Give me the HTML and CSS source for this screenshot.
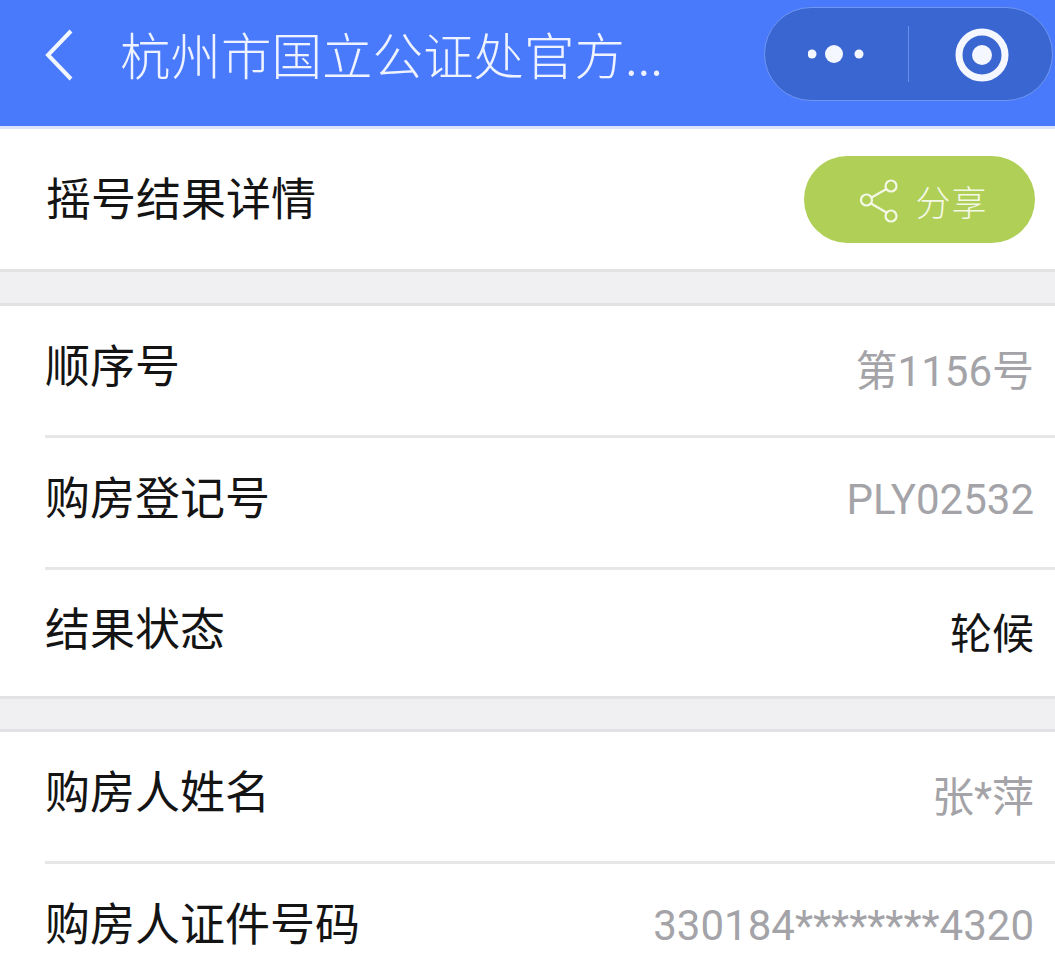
FILE: index.html
```html
<!DOCTYPE html>
<html lang="zh">
<head>
<meta charset="utf-8">
<title>摇号结果详情</title>
<link rel="stylesheet" href="styles.css">
</head>
<body>
<header class="nav">
  <svg class="back" width="30" height="52" viewBox="0 0 30 52"><path d="M27 2 L4 26 L27 50" fill="none" stroke="#f2f6ff" stroke-width="4"/></svg>
  <div class="nav-title">杭州市国立公证处官方...</div>
  <div class="capsule">
    <div class="cap-left">
      <svg width="58" height="20" viewBox="0 0 58 20"><circle cx="4" cy="10" r="4.500" fill="#f4f7ff"/><circle cx="26" cy="10" r="9" fill="#f4f7ff"/><circle cx="51" cy="10" r="4.500" fill="#f4f7ff"/></svg>
    </div>
    <div class="cap-div"></div>
    <div class="cap-right">
      <svg class="ring" width="54" height="54" viewBox="0 0 54 54"><circle cx="27" cy="27" r="23" fill="none" stroke="#f4f7ff" stroke-width="7"/><circle cx="27" cy="27" r="10" fill="#f4f7ff"/></svg>
    </div>
  </div>
</header>

<section class="head-row">
  <div class="label">摇号结果详情</div>
  <div class="share">
    <svg class="share-icon" width="40" height="44" viewBox="0 0 40 44" fill="none" stroke="#f4f8e6" stroke-width="2.2"><circle cx="31" cy="7" r="5.500"/><circle cx="6.500" cy="21" r="5.500"/><circle cx="31" cy="37" r="5.500"/><path d="M26.500 10 L11.500 18.500 M11 24.500 L26.500 33.500"/></svg>
    <span class="share-text">分享</span>
  </div>
</section>

<div class="gap gap-one"></div>

<section class="group">
  <div class="row"><div class="label">顺序号</div><div class="value">第1156号</div></div>
  <div class="row"><div class="label">购房登记号</div><div class="value">PLY02532</div></div>
  <div class="row short"><div class="label">结果状态</div><div class="value strong">轮候</div></div>
</section>

<div class="gap gap-two"></div>

<section class="group">
  <div class="row"><div class="label">购房人姓名</div><div class="value">张*萍</div></div>
  <div class="row"><div class="label">购房人证件号码</div><div class="value">330184********4320</div></div>
</section>
</body>
</html>
```

FILE: styles.css
```css
* { box-sizing: border-box; }
html, body { margin: 0; padding: 0; }
body {
  width: 1055px;
  height: 978px;
  overflow: hidden;
  background: #fff;
  font-family: "Liberation Sans", Roboto, "Noto Sans CJK SC", sans-serif;
}
.nav {
  height: 129px;
  background: #4a7afc;
  border-bottom: 3px solid #dbe4f8;
  display: flex;
  align-items: flex-start;
  position: relative;
}
.back { margin: 29px 0 0 44px; flex: none; }
.nav-title {
  margin: 26px 0 0 46px;
  font-size: 50.500px;
  line-height: 54px;
  color: #eef3ff;
  white-space: nowrap;
  font-family: "Noto Sans CJK SC", sans-serif;
  font-weight: 300;
}
.capsule {
  position: absolute;
  left: 764px;
  top: 7px;
  width: 289px;
  height: 94px;
  border-radius: 47px;
  background: #3a66d2;
  border: 1px solid #6f96f2;
  display: flex;
  align-items: center;
}
.cap-left { width: 143px; display: flex; justify-content: center; }
.cap-div { width: 1px; height: 56px; background: #6a8fe6; }
.cap-right { flex: 1; display: flex; justify-content: center; padding: 2px 0 0 2px; }
.head-row {
  height: 140px;
  display: flex;
  align-items: center;
  justify-content: space-between;
  padding: 0 20px 0 46px;
}
.label {
  font-size: 45px;
  line-height: 52px;
  padding-bottom: 13px;
  color: #141414;
  font-family: "Noto Sans CJK SC", sans-serif;
  font-weight: 400;
  white-space: nowrap;
}
.head-row .label { padding-bottom: 5px; }
.share {
  width: 231px;
  height: 87px;
  margin-top: 1px;
  padding: 2px 0 0 9px;
  border-radius: 44px;
  background: #afcf57;
  display: flex;
  align-items: center;
  justify-content: center;
  gap: 15px;
}
.share-text {
  font-size: 35px;
  color: #f4f8e6;
  font-family: "Noto Sans CJK SC", sans-serif;
  font-weight: 300;
  letter-spacing: 1px;
}
.gap {
  background: #f0eff2;
  border-top: 3px solid #e2e1e4;
  border-bottom: 3px solid #e2e1e4;
}
.gap-one { height: 37px; }
.gap-two { height: 36px; }
.group { background: #fff; }
.row {
  height: 132px;
  margin-left: 45px;
  padding-right: 21px;
  border-bottom: 3px solid #e7e7ea;
  display: flex;
  align-items: center;
  justify-content: space-between;
}
.row.short { border-bottom: 0; height: 126px; }
.value {
  font-size: 42px;
  padding-bottom: 6px;
  color: #a3a3a8;
  font-family: Roboto, "Noto Sans CJK SC", sans-serif;
  white-space: nowrap;
}
.value.strong { color: #141414; }
```
